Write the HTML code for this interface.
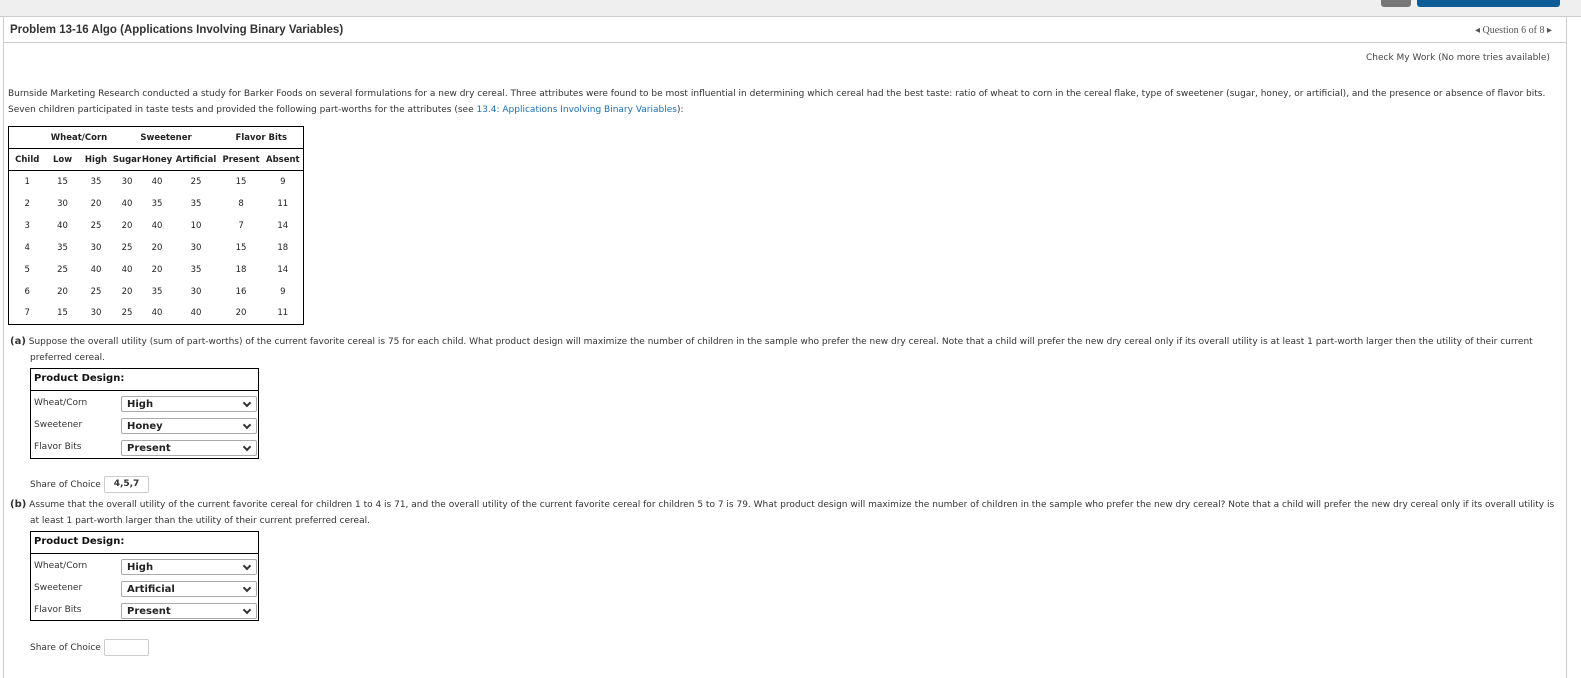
<!DOCTYPE html>
<html><head><meta charset="utf-8"><style>
*{margin:0;padding:0;box-sizing:border-box}
body{width:1581px;height:678px;background:#fff;font-family:"DejaVu Sans","Liberation Sans",sans-serif;font-size:9px;color:#333;position:relative;overflow:hidden}
.abs{position:absolute}
.top{left:0;top:0;width:1581px;height:17px;background:#efefef;border-bottom:1px solid #ccc}
.panel{left:3px;top:17px;width:1564px;height:661px;border-left:1px solid #ccc;border-right:1px solid #ccc}
table.d{border-collapse:collapse;border:1px solid #000;font-weight:bold;color:#222;font-size:8.5px;table-layout:fixed}
table.d td{text-align:center;padding:0;height:22px;white-space:nowrap;overflow:visible}
table.d tr.h td{height:22px;border-bottom:1px solid #000}
table.d tr.r td{font-weight:normal}
.pd{border:1px solid #000;width:229px}
.pd .hd{height:22px;border-bottom:1px solid #000;font-weight:bold;font-size:10px;padding:4px 3px;color:#111}
.row{position:relative;height:22px}
.row span{position:absolute;left:3px;top:7px}
.sel{position:absolute;left:90px;top:5px;width:136px;height:16px;border:1px solid #aaa;border-radius:2px;font-weight:bold;font-size:10px;padding:2px 5px;color:#222}
.sel:after{content:"";position:absolute;right:6px;top:3px;width:4px;height:4px;border-right:2px solid #333;border-bottom:2px solid #333;transform:rotate(45deg)}
.box{border:1px solid #ccc;border-radius:2px;height:17px;width:45px;font-weight:bold;text-align:center;padding-top:2px}
a{color:#1a6fb5;text-decoration:none}
</style></head><body>
<div class="abs top"></div>
<div class="abs" style="left:1381px;top:0;width:30px;height:7px;background:#777;border-radius:0 0 3px 3px"></div>
<div class="abs" style="left:1417px;top:0;width:143px;height:7px;background:#0e5c96;border-radius:0 0 3px 3px"></div>
<div class="abs panel"></div>
<div class="abs" style="left:3px;top:42px;width:1564px;border-top:1px solid #ccc"></div>
<div class="abs" style="left:10px;top:24px;font-family:'Liberation Sans',sans-serif;font-size:11.5px;font-weight:bold;color:#333">Problem 13-16 Algo (Applications Involving Binary Variables)</div>
<div class="abs" style="left:1475px;top:25px;font-family:'Liberation Serif',serif;font-size:10px;color:#555">◂ Question 6 of 8 ▸</div>
<div class="abs" style="left:1366px;top:53px;color:#444">Check My Work (No more tries available)</div>
<div class="abs" style="left:8px;top:86px;line-height:16px;width:1560px;white-space:nowrap">Burnside Marketing Research conducted a study for Barker Foods on several formulations for a new dry cereal. Three attributes were found to be most influential in determining which cereal had the best taste: ratio of wheat to corn in the cereal flake, type of sweetener (sugar, honey, or artificial), and the presence or absence of flavor bits.<br>Seven children participated in taste tests and provided the following part-worths for the attributes (see <a>13.4: Applications Involving Binary Variables</a>):</div>
<table class="abs d" style="left:8px;top:126px;width:295px">
<colgroup><col style="width:37px"><col style="width:34px"><col style="width:33px"><col style="width:29px"><col style="width:31px"><col style="width:47px"><col style="width:43px"><col style="width:41px"></colgroup>
<tr class="h"><td></td><td colspan="2">Wheat/Corn</td><td colspan="3">Sweetener</td><td colspan="2">Flavor Bits</td></tr>
<tr class="h"><td>Child</td><td>Low</td><td>High</td><td>Sugar</td><td>Honey</td><td>Artificial</td><td>Present</td><td>Absent</td></tr>
<tr class="r"><td>1</td><td>15</td><td>35</td><td>30</td><td>40</td><td>25</td><td>15</td><td>9</td></tr>
<tr class="r"><td>2</td><td>30</td><td>20</td><td>40</td><td>35</td><td>35</td><td>8</td><td>11</td></tr>
<tr class="r"><td>3</td><td>40</td><td>25</td><td>20</td><td>40</td><td>10</td><td>7</td><td>14</td></tr>
<tr class="r"><td>4</td><td>35</td><td>30</td><td>25</td><td>20</td><td>30</td><td>15</td><td>18</td></tr>
<tr class="r"><td>5</td><td>25</td><td>40</td><td>40</td><td>20</td><td>35</td><td>18</td><td>14</td></tr>
<tr class="r"><td>6</td><td>20</td><td>25</td><td>20</td><td>35</td><td>30</td><td>16</td><td>9</td></tr>
<tr class="r"><td>7</td><td>15</td><td>30</td><td>25</td><td>40</td><td>40</td><td>20</td><td>11</td></tr>
</table>
<div class="abs" style="left:10px;top:334px;line-height:16px;width:1550px;padding-left:20px;text-indent:-20px"><b style="font-size:10px">(a)</b> Suppose the overall utility (sum of part-worths) of the current favorite cereal is 75 for each child. What product design will maximize the number of children in the sample who prefer the new dry cereal. Note that a child will prefer the new dry cereal only if its overall utility is at least 1 part-worth larger then the utility of their current preferred cereal.</div>
<div class="abs pd" style="left:30px;top:368px;height:91px">
<div class="hd">Product Design:</div>
<div class="row"><span>Wheat/Corn</span><div class="sel">High</div></div>
<div class="row"><span>Sweetener</span><div class="sel">Honey</div></div>
<div class="row"><span>Flavor Bits</span><div class="sel">Present</div></div>
</div>
<div class="abs" style="left:30px;top:480px">Share of Choice</div>
<div class="abs box" style="left:104px;top:476px">4,5,7</div>
<div class="abs" style="left:10px;top:497px;line-height:16px;width:1550px;padding-left:20px;text-indent:-20px"><b style="font-size:10px">(b)</b> Assume that the overall utility of the current favorite cereal for children 1 to 4 is 71, and the overall utility of the current favorite cereal for children 5 to 7 is 79. What product design will maximize the number of children in the sample who prefer the new dry cereal? Note that a child will prefer the new dry cereal only if its overall utility is at least 1 part-worth larger than the utility of their current preferred cereal.</div>
<div class="abs pd" style="left:30px;top:531px;height:90px">
<div class="hd">Product Design:</div>
<div class="row"><span>Wheat/Corn</span><div class="sel">High</div></div>
<div class="row"><span>Sweetener</span><div class="sel">Artificial</div></div>
<div class="row"><span>Flavor Bits</span><div class="sel">Present</div></div>
</div>
<div class="abs" style="left:30px;top:643px">Share of Choice</div>
<div class="abs box" style="left:104px;top:639px"></div>
</body></html>
